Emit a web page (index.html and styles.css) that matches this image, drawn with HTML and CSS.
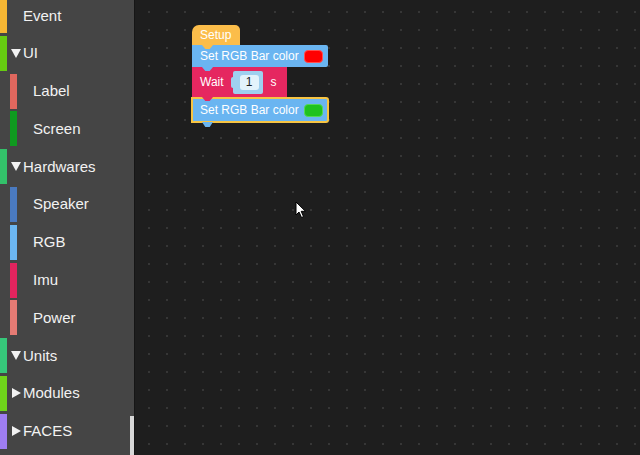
FILE: index.html
```html
<!DOCTYPE html>
<html>
<head>
<meta charset="utf-8">
<link rel="stylesheet" href="styles.css">
</head>
<body>
<div class="app">
  <aside class="toolbox">
    <ul class="cats">
      <li class="cat top"><span class="bar c-event"></span><span class="arrow"></span><span class="name">Event</span></li>
      <li class="cat top"><span class="bar c-ui"></span><span class="arrow"><i class="tri down"></i></span><span class="name">UI</span></li>
      <li class="cat sub"><span class="bar c-label"></span><span class="name">Label</span></li>
      <li class="cat sub"><span class="bar c-screen"></span><span class="name">Screen</span></li>
      <li class="cat top"><span class="bar c-hw"></span><span class="arrow"><i class="tri down"></i></span><span class="name">Hardwares</span></li>
      <li class="cat sub"><span class="bar c-speaker"></span><span class="name">Speaker</span></li>
      <li class="cat sub"><span class="bar c-rgb"></span><span class="name">RGB</span></li>
      <li class="cat sub"><span class="bar c-imu"></span><span class="name">Imu</span></li>
      <li class="cat sub"><span class="bar c-power"></span><span class="name">Power</span></li>
      <li class="cat top"><span class="bar c-units"></span><span class="arrow"><i class="tri down"></i></span><span class="name">Units</span></li>
      <li class="cat top"><span class="bar c-modules"></span><span class="arrow"><i class="tri right"></i></span><span class="name">Modules</span></li>
      <li class="cat top"><span class="bar c-faces"></span><span class="arrow"><i class="tri right"></i></span><span class="name">FACES</span></li>
    </ul>
    <div class="scroll"><div class="thumb"></div></div>
  </aside>
  <main class="workspace">
    <div class="stack">
      <div class="block hat"><span>Setup</span></div>
      <div class="block rgb"><span>Set RGB Bar color</span><span class="swatch red"></span></div>
      <div class="block wait"><span>Wait</span><span class="num"><span class="numval">1</span></span><span class="unit">s</span></div>
      <div class="block rgb selected"><span>Set RGB Bar color</span><span class="swatch green"></span></div>
    </div>
    <svg class="cursor" width="12" height="18" viewBox="0 0 12 18">
      <path d="M1 1 L1 14 L4 11 L6.5 16.5 L8.5 15.6 L6.2 10.3 L10.5 10.3 Z" fill="#fff" stroke="#000" stroke-width="1"/>
    </svg>
  </main>
</div>
</body>
</html>
```
FILE: styles.css
```css
html, body {
  margin: 0;
  padding: 0;
  width: 640px;
  height: 455px;
  overflow: hidden;
  background: #1e1e1e;
  font-family: "Liberation Sans", Arial, sans-serif;
}
.app {
  display: flex;
  width: 640px;
  height: 455px;
}
.toolbox {
  width: 134px;
  flex: none;
  background: #454545;
  display: flex;
  position: relative;
  overflow: hidden;
}
.cats {
  list-style: none;
  margin: -2px 0 0 0;
  padding: 0;
  width: 130px;
}
.cat {
  height: 35px;
  margin-bottom: 2.8px;
  display: flex;
  align-items: center;
  color: #f2f2f2;
  font-size: 15px;
}
.bar {
  width: 7px;
  height: 35px;
  flex: none;
}
.top .arrow {
  width: 16px;
  flex: none;
  display: flex;
  justify-content: center;
  align-items: center;
  padding-left: 1px;
  box-sizing: border-box;
}
.tri {
  display: block;
  width: 0;
  height: 0;
}
.tri.down {
  border-left: 5px solid transparent;
  border-right: 5px solid transparent;
  border-top: 9px solid #f2f2f2;
}
.tri.right {
  border-top: 5px solid transparent;
  border-bottom: 5px solid transparent;
  border-left: 9px solid #f2f2f2;
  margin-left: 1px;
}
.sub .bar {
  margin-left: 10px;
  margin-right: 16px;
}
.name { padding-bottom: 1px; }
.c-event { background: #f7b733; }
.c-ui { background: #66cc11; }
.c-label { background: #e0675e; }
.c-screen { background: #0f9a1f; }
.c-hw { background: #33c16a; }
.c-speaker { background: #4a7ac0; }
.c-rgb { background: #6cb7f2; }
.c-imu { background: #e2245e; }
.c-power { background: #e57b74; }
.c-units { background: #36c77a; }
.c-modules { background: #6fd41a; }
.c-faces { background: #9f7ef2; }
.scroll {
  width: 4px;
  display: flex;
  flex-direction: column;
  justify-content: flex-end;
}
.thumb {
  height: 39px;
  background: #d8d8d8;
}
.workspace {
  flex: 1;
  position: relative;
  background-color: #1e1e1e;
  background-image: radial-gradient(circle, #363636 0.8px, transparent 1.2px);
  background-size: 18px 18px;
  background-position: 5px 3px;
  border-left: 1px solid #161616;
}
.stack {
  position: absolute;
  left: 57px;
  top: 25px;
  display: flex;
  flex-direction: column;
  align-items: flex-start;
}
.block {
  position: relative;
  display: flex;
  align-items: center;
  box-sizing: border-box;
  padding-left: 8px;
  color: #fff;
  font-size: 12px;
}
.block::after {
  content: "";
  position: absolute;
  left: 10px;
  bottom: -4px;
  width: 11px;
  height: 4px;
  clip-path: polygon(0 0, 100% 0, 70% 100%, 30% 100%);
  z-index: 2;
}
.hat {
  width: 48px;
  height: 20px;
  background: #fbbd4a;
  border-radius: 7px 5px 0 0;
}
.hat::after { background: #fbbd4a; }
.rgb {
  width: 136px;
  height: 22px;
  background: #6ab5f1;
  border-radius: 0 2px 2px 0;
}
.rgb::after { background: #6ab5f1; }
.rgb .swatch {
  margin-left: auto;
  margin-right: 5px;
  width: 19px;
  height: 13px;
  border-radius: 4px;
  box-sizing: border-box;
}
.swatch.red { background: #ff0000; border: 1px solid #ff5050; }
.swatch.green { background: #1fc21f; border: 1px solid #55d855; }
.wait {
  width: 95px;
  height: 30px;
  background: #e52760;
}
.wait::after { background: #e52760; }
.num {
  position: relative;
  margin-left: 9px;
  width: 30px;
  height: 23px;
  background: #9fd0ef;
  border-radius: 2px;
  display: flex;
  align-items: center;
  justify-content: flex-end;
  padding-right: 4px;
  box-sizing: border-box;
}
.num::before {
  content: "";
  position: absolute;
  left: -2px;
  top: 6px;
  width: 4px;
  height: 11px;
  background: #9fd0ef;
  border-radius: 2px 0 0 2px;
}
.numval {
  width: 19px;
  height: 15px;
  background: #e3f3fb;
  border-radius: 3px;
  color: #222;
  font-size: 12px;
  text-align: center;
  line-height: 15px;
}
.unit { margin-left: 8px; }
.selected {
  height: 24px;
  margin-top: 1px;
  outline: 2px solid #f7c443;
  outline-offset: -1px;
}
.selected::after {
  bottom: -5px;
  height: 5px;
  background: #6ab5f1;
}
.cursor {
  position: absolute;
  left: 160px;
  top: 201px;
}
```
